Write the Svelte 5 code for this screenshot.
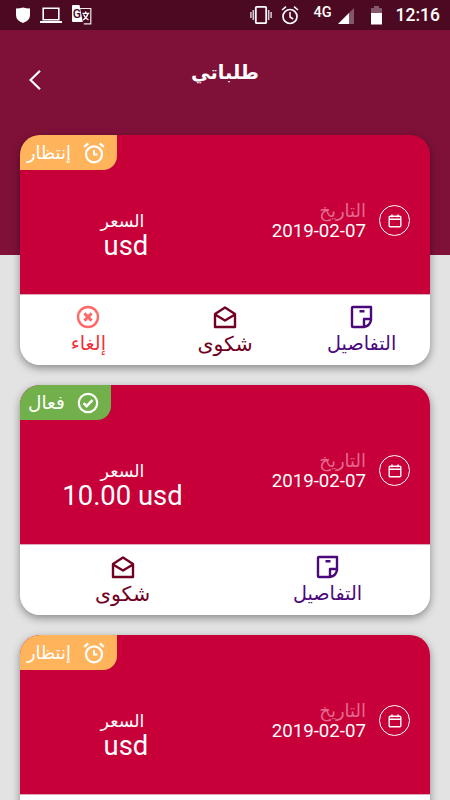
<script lang="ts">
	type Status = 'waiting' | 'active';
	type Action = 'details' | 'complaint' | 'cancel';
	type Order = { id: number; status: Status; date: string; amount: string; currency: string; actions: Action[] };

	const statusLabels: Record<Status, string> = {
		waiting: 'إنتظار',
		active: 'فعال',
	};

	const actionLabels: Record<Action, string> = {
		details: 'التفاصيل',
		complaint: 'شكوى',
		cancel: 'إلغاء',
	};

	const orders: Order[] = [
		{ id: 1, status: 'waiting', date: '2019-02-07', amount: '', currency: 'usd', actions: ['details', 'complaint', 'cancel'] },
		{ id: 2, status: 'active', date: '2019-02-07', amount: '10.00', currency: 'usd', actions: ['details', 'complaint'] },
		{ id: 3, status: 'waiting', date: '2019-02-07', amount: '', currency: 'usd', actions: ['details', 'complaint', 'cancel'] },
	];
</script>

<div class="screen">
	<div class="status-bar">
		<div class="notifications">
			<svg width="14" height="17" viewBox="0 0 14 17"><path d="M0 1.5Q4 1.5 7 .5Q10 1.5 14 1.5V8Q14 13.5 7 16Q0 13.5 0 8Z" fill="#fff" /></svg>
			<svg width="22" height="17" viewBox="0 0 22 17"><path d="M3.2 1.2h15.6v11.6H3.2z" fill="none" stroke="#fff" stroke-width="1.6" /><path d="M0 14h22v2H0z" fill="#fff" /></svg>
			<svg width="20" height="20" viewBox="0 0 20 20">
				<path d="M8 3.5h10.8v15.3h-7" fill="none" stroke="#f3e9ed" stroke-width="1.2" />
				<path d="M1 0h6.5l3.3 17H1a1 1 0 0 1-1-1V1a1 1 0 0 1 1-1z" fill="#fff" />
				<text x=".8" y="13" font-family="Roboto, sans-serif" font-size="12" font-weight="500" fill="#4b0a21">G</text>
				<path d="M10.5 8.3h6.8M13.7 6.5v1.8M16 8.5q-1 4-5 6.5M11.5 9.5q1.5 3.5 5 5.5" fill="none" stroke="#fff" stroke-width="1.3" />
			</svg>
		</div>
		<div class="system">
			<svg class="vibrate" width="22" height="20" viewBox="0 0 22 20"><rect x="5.8" y="1.8" width="10.4" height="16.4" rx="1" fill="none" stroke="#fff" stroke-width="1.8" /><path d="M3.3 5v10M18.7 5v10M.9 7v6M21.1 7v6" stroke="#dbcad1" stroke-width="1.5" /></svg>
			<svg class="alarm" width="18" height="19" viewBox="0 0 18 19"><circle cx="9" cy="10.5" r="7" fill="none" stroke="#fff" stroke-width="1.7" /><path d="M1 4l4-3.3M17 4l-4-3.3M9 6v5l3.2 2" fill="none" stroke="#fff" stroke-width="1.5" /></svg>
			<span class="network">4G</span>
			<svg class="signal" width="16" height="16" viewBox="0 0 16 16"><path d="M16 0v16H0z" fill="#84586a" /><path d="M11 5v11H0z" fill="#fff" /></svg>
			<svg class="battery" width="11" height="19" viewBox="0 0 11 19"><path d="M3 0h5v2h3v5H0V2h3z" fill="#84586a" /><path d="M0 7h11v11.5H0z" fill="#fff" /></svg>
			<span class="clock">12:16</span>
		</div>
	</div>

	<header>
		<button class="back" aria-label="رجوع">
			<svg width="12" height="20" viewBox="0 0 12 20"><path d="M11 .8L1.5 10l9.5 9.2" fill="none" stroke="#fff" stroke-width="2.2" /></svg>
		</button>
		<h1>طلباتي</h1>
	</header>

	<main dir="rtl">
		{#each orders as order (order.id)}
			<article class="card">
				<div class="summary">
					<div class="badge {order.status}">
						<svg width="22" height="22" viewBox="0 0 22 22" fill="none" stroke="#fff">
							{#if order.status === 'waiting'}
								<circle cx="11" cy="12.3" r="8" stroke-width="2.2" />
								<path d="M1.2 4.8l4-3.5M20.8 4.8l-4-3.5" stroke-width="2.4" />
								<path d="M11 8v4.5h3.5" stroke-width="2" />
							{:else}
								<circle cx="11" cy="11" r="9.2" stroke-width="2.2" />
								<path d="M6.6 11.2l3 3 5.8-6" stroke-width="2.5" />
							{/if}
						</svg>
						<span>{statusLabels[order.status]}</span>
					</div>
					<div class="date">
						<span class="date-icon">
							<svg width="14" height="14" viewBox="0 0 14 14"><rect x="1.2" y="2.2" width="11.6" height="10.6" rx="1" fill="none" stroke="#fff" stroke-width="1.4" /><path d="M1 5.3h12M4 .5v2.8M10 .5v2.8" stroke="#fff" stroke-width="1.5" /></svg>
						</span>
						<div class="date-text">
							<span class="date-label">التاريخ</span>
							<span class="date-value">{order.date}</span>
						</div>
					</div>
					<div class="price">
						<span class="price-label">السعر</span>
						<span class="price-value" dir="ltr">{order.amount + ' ' + order.currency}</span>
					</div>
				</div>
				<div class="actions">
					{#each order.actions as action}
						<button class="action {action}">
							<svg width="24" height="24" viewBox="0 0 24 24" fill="none" stroke="currentColor" stroke-width="2.4" stroke-linejoin="round">
								{#if action === 'details'}
									<path d="M3 2h18v13q-1 6-7 7H3q-1 0-1-1V3q0-1 1-1zM14 22v-8h8M9.5 6.2h5" />
								{:else if action === 'complaint'}
									<path d="M2 9l10-6.5L22 9v13H2zM2 9.5l10 6 10-6" />
								{:else}
									<circle cx="12" cy="12" r="10" />
									<path d="M8.4 8.4l7.2 7.2M15.6 8.4l-7.2 7.2" stroke-width="3" />
								{/if}
							</svg>
							<span>{actionLabels[action]}</span>
						</button>
					{/each}
				</div>
			</article>
		{/each}
	</main>
</div>

<style>
	:global(body) {
		overflow: hidden;
	}
	.screen {
		height: 800px;
		overflow: hidden;
		background: linear-gradient(#7f1139 255px, #e3e3e3 255px);
		color: #fff;
		font-family: Roboto, 'DejaVu Sans', sans-serif;
	}
	.status-bar {
		display: flex;
		justify-content: space-between;
		height: 30px;
		padding: 0 10px 0 16px;
		background: #4b0a21;
	}
	.notifications,
	.system {
		display: flex;
		align-items: center;
	}
	.notifications {
		gap: 10px;
	}
	.alarm {
		margin-left: 9px;
	}
	.network {
		margin: -6px 6px 0 14px;
		font-size: 14.5px;
		font-weight: 500;
	}
	.signal {
		margin-top: 2px;
	}
	.battery {
		margin: 0 14px 0 17px;
	}
	.clock {
		font-size: 17.5px;
		font-weight: 500;
		line-height: 31px;
	}
	header {
		display: grid;
		grid-template-columns: 90px 1fr 90px;
		align-items: start;
		height: 105px;
	}
	button {
		padding: 0;
		border: 0;
		background: none;
		font: inherit;
		color: inherit;
	}
	.back {
		display: flex;
		margin: 40px 0 0 29px;
	}
	h1 {
		margin: 28px 0 0;
		font-size: 19.3px;
		line-height: 30px;
		text-align: center;
	}
	main {
		display: flex;
		flex-direction: column;
		gap: 20px;
		padding: 0 20px;
	}
	.card {
		flex: none;
		height: 230px;
		overflow: hidden;
		border-radius: 20px;
		box-shadow: 0 3px 9px rgba(0, 0, 0, 0.4);
	}
	.summary {
		position: relative;
		display: grid;
		grid-template-columns: 1fr 1fr;
		height: 160px;
		box-sizing: border-box;
		background: #c80039;
		border-bottom: 1px solid #dfa9b5;
	}
	.badge {
		position: absolute;
		top: 0;
		left: 0;
		display: flex;
		align-items: center;
		gap: 12px;
		height: 35px;
		padding: 0 12px 0 7px;
		border-bottom-right-radius: 14px;
		font-size: 17.8px;
	}
	.badge.waiting {
		background: #ffb45c;
	}
	.badge.active {
		padding-left: 8px;
		background: #72b04c;
		font-size: 18.5px;
	}
	.date {
		display: flex;
		align-items: start;
		gap: 13px;
		padding: 66px 20px 0 0;
	}
	.date-icon {
		display: flex;
		align-items: center;
		justify-content: center;
		width: 31px;
		height: 31px;
		margin-top: 4px;
		border: 1.3px solid #fff;
		border-radius: 50%;
		box-sizing: border-box;
	}
	.date-text,
	.price {
		display: flex;
		flex-direction: column;
	}
	.date-label {
		font-size: 18px;
		line-height: 20px;
		color: #e36a8c;
	}
	.date-value {
		font-size: 18.7px;
		line-height: 20px;
	}
	.price {
		align-items: center;
		padding-top: 76px;
	}
	.price-label {
		font-size: 17.5px;
		line-height: 20px;
	}
	.price-value {
		font-size: 27.4px;
		line-height: 31px;
		white-space: pre;
	}
	.actions {
		display: flex;
		height: 70px;
		background: #fff;
	}
	.action {
		flex: 1;
		display: flex;
		flex-direction: column;
		align-items: center;
		padding-top: 10px;
		font-size: 19.2px;
		line-height: 30px;
	}
	.details {
		color: #4b087c;
	}
	.complaint {
		color: #720023;
	}
	.complaint span {
		font-size: 20.5px;
	}
	.cancel {
		color: #ff6969;
	}
	.cancel span {
		color: #f22f36;
	}
</style>
